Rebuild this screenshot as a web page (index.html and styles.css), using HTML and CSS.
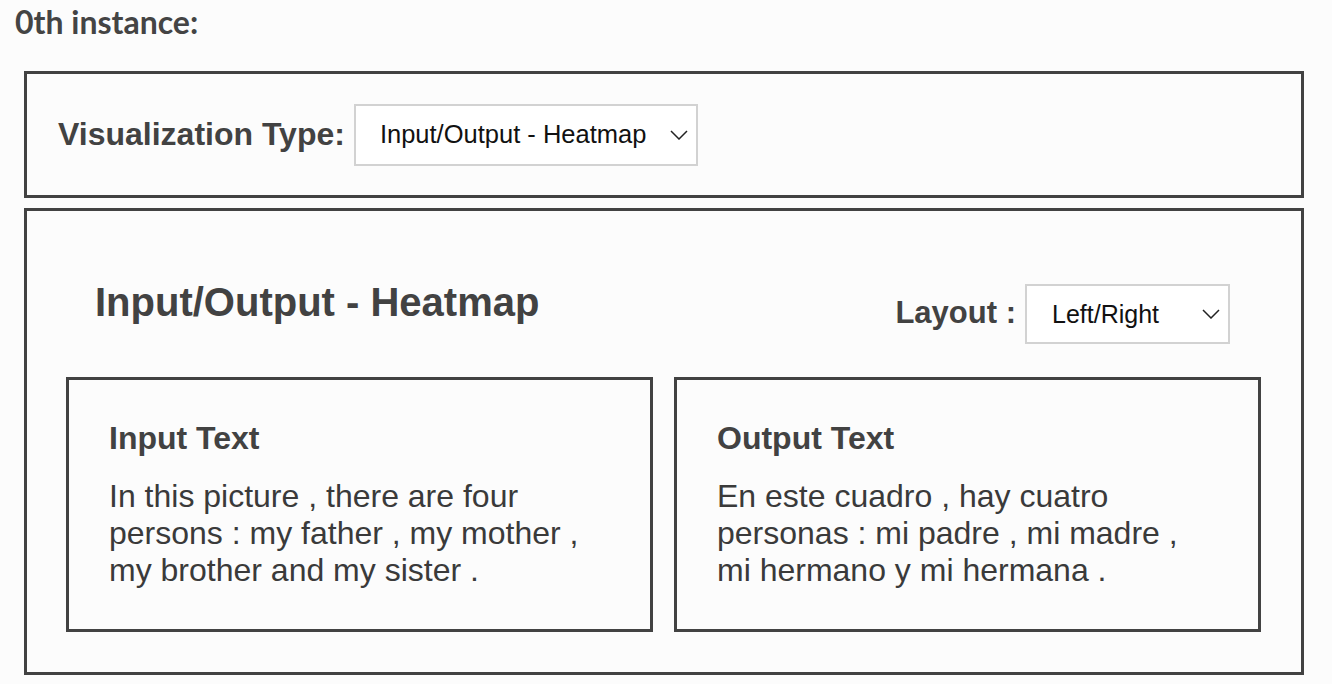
FILE: index.html
```html
<!DOCTYPE html>
<html lang="en">
<head>
<meta charset="utf-8">
<title>0th instance</title>
<link rel="stylesheet" href="styles.css">
</head>
<body>
<div class="page">
  <div class="instance-title">0th instance:</div>

  <div class="panel panel-controls">
    <span class="ctl-label">Visualization Type:</span>
    <div class="fake-select select-type">
      <span class="select-text">Input/Output - Heatmap</span>
      <svg class="chev" width="18" height="10" viewBox="0 0 18 10"><polyline points="1,1 9,9 17,1" fill="none" stroke="#222" stroke-width="1.5"/></svg>
    </div>
  </div>

  <div class="panel panel-viz">
    <div class="viz-header">
      <h2 class="viz-title">Input/Output - Heatmap</h2>
      <div class="layout-ctl">
        <span class="ctl-label">Layout :</span>
        <div class="fake-select select-layout">
          <span class="select-text">Left/Right</span>
          <svg class="chev" width="18" height="10" viewBox="0 0 18 10"><polyline points="1,1 9,9 17,1" fill="none" stroke="#222" stroke-width="1.5"/></svg>
        </div>
      </div>
    </div>
    <div class="viz-body">
      <div class="text-box">
        <h3 class="box-title">Input Text</h3>
        <p class="box-text">In this picture , there are four persons : my father , my mother , my brother and my sister .</p>
      </div>
      <div class="text-box">
        <h3 class="box-title">Output Text</h3>
        <p class="box-text">En este cuadro , hay cuatro personas : mi padre , mi madre , mi hermano y mi hermana .</p>
      </div>
    </div>
  </div>
</div>
</body>
</html>
```

FILE: styles.css
```css
html, body {
  margin: 0;
  padding: 0;
  background: #fcfcfc;
}
.page {
  padding: 2px 28px 0 24px;
  font-family: "Liberation Sans", Arial, sans-serif;
  color: #424242;
}
.instance-title {
  font-family: Lato, "Open Sans", sans-serif;
  font-weight: 700;
  font-size: 32px;
  color: #444;
  margin: 0 0 30px -9px;
}
.panel {
  border: 3px solid #424242;
}
.panel-controls {
  height: 121px;
  display: flex;
  align-items: center;
  padding-left: 31px;
  gap: 9px;
}
.panel-controls .ctl-label {
  font-size: 32px;
}
.ctl-label {
  font-weight: 700;
  font-size: 31px;
  color: #424242;
}
.fake-select {
  box-sizing: border-box;
  background: #fff;
  border: 2px solid #d2d2d2;
  display: flex;
  align-items: center;
  justify-content: space-between;
  color: #111;
  font-size: 25.5px;
}
.select-type {
  width: 344px;
  height: 62px;
  padding: 0 8px 0 24px;
}
.select-layout {
  width: 205px;
  height: 60px;
  padding: 0 8px 0 25px;
  font-size: 25px;
}
.chev {
  display: block;
  flex: none;
}
.panel-viz {
  margin-top: 10px;
  padding: 0 0 40px 0;
}
.viz-header {
  display: flex;
  justify-content: space-between;
  align-items: flex-start;
  padding: 69px 71px 0 68px;
}
.viz-title {
  margin: 0;
  font-size: 40px;
  font-weight: 700;
  color: #424242;
}
.layout-ctl {
  display: flex;
  align-items: center;
  gap: 9px;
  margin-top: 4px;
}
.layout-ctl .ctl-label {
  margin-top: -3px;
}
.viz-body {
  display: flex;
  gap: 21px;
  padding: 33px 40px 0 39px;
}
.text-box {
  flex: 1;
  border: 3px solid #424242;
  padding: 40px 40px 40px 40px;
}
.box-title {
  margin: 0 0 21px 0;
  font-size: 32px;
  font-weight: 700;
  color: #424242;
}
.box-text {
  margin: 0;
  font-size: 32px;
  color: #3a3a3a;
}
```
